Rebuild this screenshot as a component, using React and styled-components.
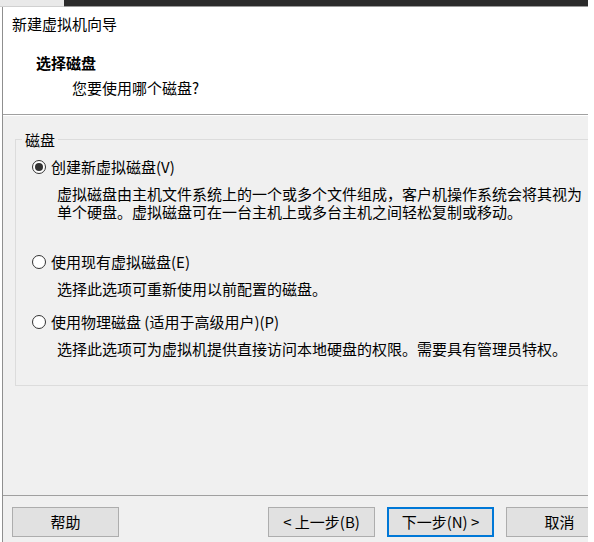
import React from "react";
import styled, { createGlobalStyle } from "styled-components";

const GlobalStyle = createGlobalStyle`
  html, body {
    margin: 0;
    padding: 0;
    background: #ffffff;
    overflow: hidden;
  }
  body {
    font-family: "Noto Sans CJK SC", "Microsoft YaHei", sans-serif;
    color: #000;
  }
`;

const TopStrip = styled.div`
  display: flex;
  height: 7px;
  width: 588px;
`;

const StripPart = styled.div`
  width: ${(p) => p.$w}px;
  flex: ${(p) => (p.$w ? "none" : 1)};
  background: ${(p) => p.$bg};
  border-bottom: 1px solid ${(p) => p.$line};
`;

const Window = styled.div`
  margin-left: 2px;
  width: 585px;
  height: 535px;
  border-left: 1px solid #8f8f8f;
  overflow: hidden;
  display: flex;
  flex-direction: column;
  font-size: 15px;
  line-height: 18px;
`;

const Header = styled.div`
  background: #ffffff;
  height: 108px;
  padding: 8px 0 0 9px;
  box-sizing: border-box;
  border-bottom: 1px solid #a0a0a0;
`;

const WindowTitle = styled.div`
  height: 18px;
`;

const PageTitle = styled.div`
  font-weight: bold;
  margin: 21px 0 0 24px;
  height: 18px;
`;

const PageSub = styled.div`
  margin: 7px 0 0 60px;
  height: 18px;
`;

const Body = styled.div`
  background: #f0f0f0;
  border-top: 1px solid #ffffff;
  height: 380px;
  box-sizing: border-box;
  padding: 23px 0 0 12px;
`;

const GroupBox = styled.div`
  position: relative;
  width: 620px;
  border: 1px solid #dcdcdc;
  padding: 18px 0 27px 16px;
`;

const GroupLabel = styled.span`
  position: absolute;
  top: -9px;
  left: 6px;
  padding: 0 3px;
  background: #f0f0f0;
`;

const RadioRow = styled.div`
  display: flex;
  align-items: center;
  gap: 5px;
  height: 18px;
  margin-top: ${(p) => p.$top || 0}px;
`;

const RadioCircle = styled.span`
  width: 14px;
  height: 14px;
  box-sizing: border-box;
  border: 1px solid #333;
  border-radius: 50%;
  background: #fff;
  display: flex;
  align-items: center;
  justify-content: center;
  flex: none;
  &::after {
    content: "";
    width: 8px;
    height: 8px;
    border-radius: 50%;
    background: ${(p) => (p.$checked ? "#333" : "transparent")};
  }
`;

const Desc = styled.div`
  margin: 9px 0 0 25px;
  width: 528px;
`;

const Footer = styled.div`
  border-top: 1px solid #a0a0a0;
  background: #f0f0f0;
  flex: 1;
  display: flex;
  padding: 11px 0 0 9px;
  gap: 12px;
`;

const Button = styled.div`
  width: 107px;
  height: 30px;
  flex: none;
  box-sizing: border-box;
  border: ${(p) => (p.$primary ? "2px solid #0078d7" : "1px solid #adadad")};
  background: #e1e1e1;
  display: flex;
  align-items: center;
  justify-content: center;
  margin-left: ${(p) => p.$push || 0}px;
`;

const options = [
  {
    label: "创建新虚拟磁盘(V)",
    desc: "虚拟磁盘由主机文件系统上的一个或多个文件组成，客户机操作系统会将其视为单个硬盘。虚拟磁盘可在一台主机上或多台主机之间轻松复制或移动。",
    checked: true,
    top: 0,
  },
  {
    label: "使用现有虚拟磁盘(E)",
    desc: "选择此选项可重新使用以前配置的磁盘。",
    top: 32,
  },
  {
    label: "使用物理磁盘 (适用于高级用户)(P)",
    desc: "选择此选项可为虚拟机提供直接访问本地硬盘的权限。需要具有管理员特权。",
    top: 15,
  },
];

export default function App() {
  return (
    <>
      <GlobalStyle />
      <TopStrip>
        <StripPart $w={64} $bg="#e9e9e9" $line="#d0d0d0" />
        <StripPart $bg="#2b2b2b" $line="#9a9a9a" />
      </TopStrip>
      <Window>
        <Header>
          <WindowTitle>新建虚拟机向导</WindowTitle>
          <PageTitle>选择磁盘</PageTitle>
          <PageSub>您要使用哪个磁盘?</PageSub>
        </Header>
        <Body>
          <GroupBox>
            <GroupLabel>磁盘</GroupLabel>
            {options.map((o) => (
              <div key={o.label}>
                <RadioRow $top={o.top}>
                  <RadioCircle $checked={o.checked} />
                  {o.label}
                </RadioRow>
                <Desc>{o.desc}</Desc>
              </div>
            ))}
          </GroupBox>
        </Body>
        <Footer>
          <Button>帮助</Button>
          <Button $push={137}>&lt; 上一步(B)</Button>
          <Button $primary>下一步(N) &gt;</Button>
          <Button>取消</Button>
        </Footer>
      </Window>
    </>
  );
}
